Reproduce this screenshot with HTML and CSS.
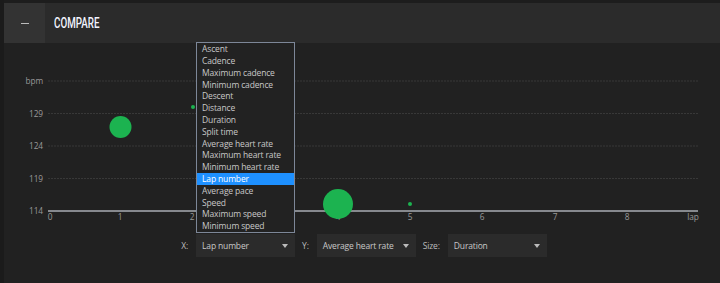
FILE: index.html
```html
<!DOCTYPE html>
<html>
  <head>
    <meta charset="utf-8">
    <title>Compare</title>
    <link rel="stylesheet" href="styles.css">
  </head>
  <body>
    <div class="panel">
      <div class="panel-head">
        <div class="toggle"><span class="dash"></span></div>
        <h2 class="title">COMPARE</h2>
      </div>
      <svg class="chart" viewBox="4 43 716 187" width="716" height="187">
        <g class="grid">
          <line x1="48" y1="81" x2="698" y2="81"/>
          <line x1="48" y1="113.5" x2="698" y2="113.5"/>
          <line x1="48" y1="146" x2="698" y2="146"/>
          <line x1="48" y1="178.5" x2="698" y2="178.5"/>
        </g>
        <line class="axis" x1="48" y1="211" x2="698" y2="211"/>
        <g class="ylabels">
          <text x="43" y="84">bpm</text>
          <text x="43" y="117">129</text>
          <text x="43" y="149">124</text>
          <text x="43" y="182">119</text>
          <text x="43" y="214">114</text>
        </g>
        <g class="xlabels">
          <text x="50" y="220">0</text>
          <text x="120" y="220">1</text>
          <text x="192" y="220">2</text>
          <text x="338" y="220">4</text>
          <text x="410" y="220">5</text>
          <text x="482" y="220">6</text>
          <text x="555" y="220">7</text>
          <text x="627" y="220">8</text>
          <text x="693" y="220">lap</text>
        </g>
        <g class="dots">
          <circle cx="120.5" cy="127" r="11"/>
          <circle cx="193" cy="107" r="2"/>
          <circle cx="338" cy="204" r="15"/>
          <circle cx="410" cy="204" r="2"/>
        </g>
      </svg>
      <div class="controls">
        <label class="ctl-label">X:</label>
        <div class="select open">
          <span>Lap number</span>
          <span class="caret"></span>
          <ul class="options">
            <li>Ascent</li>
            <li>Cadence</li>
            <li>Maximum cadence</li>
            <li>Minimum cadence</li>
            <li>Descent</li>
            <li>Distance</li>
            <li>Duration</li>
            <li>Split time</li>
            <li>Average heart rate</li>
            <li>Maximum heart rate</li>
            <li>Minimum heart rate</li>
            <li class="selected">Lap number</li>
            <li>Average pace</li>
            <li>Speed</li>
            <li>Maximum speed</li>
            <li>Minimum speed</li>
          </ul>
        </div>
        <label class="ctl-label">Y:</label>
        <div class="select">
          <span>Average heart rate</span>
          <span class="caret"></span>
        </div>
        <label class="ctl-label">Size:</label>
        <div class="select">
          <span>Duration</span>
          <span class="caret"></span>
        </div>
      </div>
    </div>
  </body>
</html>
```

FILE: styles.css
```css
html, body {
  margin: 0;
  height: 100%;
}
body {
  background: #1b1b1b;
  font-family: "Open Sans", "Liberation Sans", sans-serif;
  overflow: hidden;
}
.panel {
  margin-left: 4px;
  height: 100%;
  background: #212121;
}
.panel-head {
  display: flex;
  height: 40px;
  border-top: 3px solid #1d1d1d;
  background: #2b2b2b;
}
.toggle {
  width: 41px;
  background: #333;
  display: flex;
  align-items: center;
  justify-content: center;
}
.dash {
  width: 8px;
  height: 1px;
  background: #bbb;
}
.title {
  margin: 0 0 0 9px;
  line-height: 40px;
  font-family: Roboto, "DejaVu Sans", sans-serif;
  font-weight: 500;
  font-size: 14px;
  color: #f2f4ff;
  transform: scaleX(0.7);
  transform-origin: left center;
}
.chart {
  display: block;
}
.grid line {
  stroke: #383838;
  stroke-width: 1;
  stroke-dasharray: 2 1;
}
.axis {
  stroke: #a9adb3;
  stroke-width: 1.5;
}
.chart text {
  font-family: "Open Sans", "Liberation Sans", sans-serif;
  font-size: 8.3px;
  letter-spacing: -0.1px;
  fill: #999;
}
.ylabels text {
  text-anchor: end;
}
.xlabels text {
  text-anchor: middle;
}
.dots circle {
  fill: #1cb350;
}
.controls {
  display: flex;
  justify-content: center;
  align-items: center;
  padding: 4px 0 0 4px;
  font-size: 8.5px;
  letter-spacing: -0.15px;
  color: #bbb;
}
.ctl-label {
  margin: 0 8px 0 7px;
}
.ctl-label:first-child {
  margin-left: 0;
}
.select {
  position: relative;
  display: flex;
  align-items: center;
  justify-content: space-between;
  box-sizing: border-box;
  width: 99px;
  height: 23px;
  padding: 0 6px;
  background: #2b2b2b;
  color: #c8c8c8;
}
.caret {
  width: 0;
  height: 0;
  border-left: 3px solid transparent;
  border-right: 3px solid transparent;
  border-top: 4px solid #bbb;
  margin-right: 1px;
}
.options {
  position: absolute;
  left: 0;
  bottom: 100%;
  margin: 0 0 1px;
  padding: 0;
  list-style: none;
  width: 99px;
  box-sizing: border-box;
  border: 1px solid #7d8798;
  background: #222;
}
.options li {
  height: 11.8px;
  line-height: 11.8px;
  padding-left: 5px;
  color: #c8c8c8;
  white-space: nowrap;
}
.options .selected {
  background: #1e90ff;
  color: #fff;
}
```
